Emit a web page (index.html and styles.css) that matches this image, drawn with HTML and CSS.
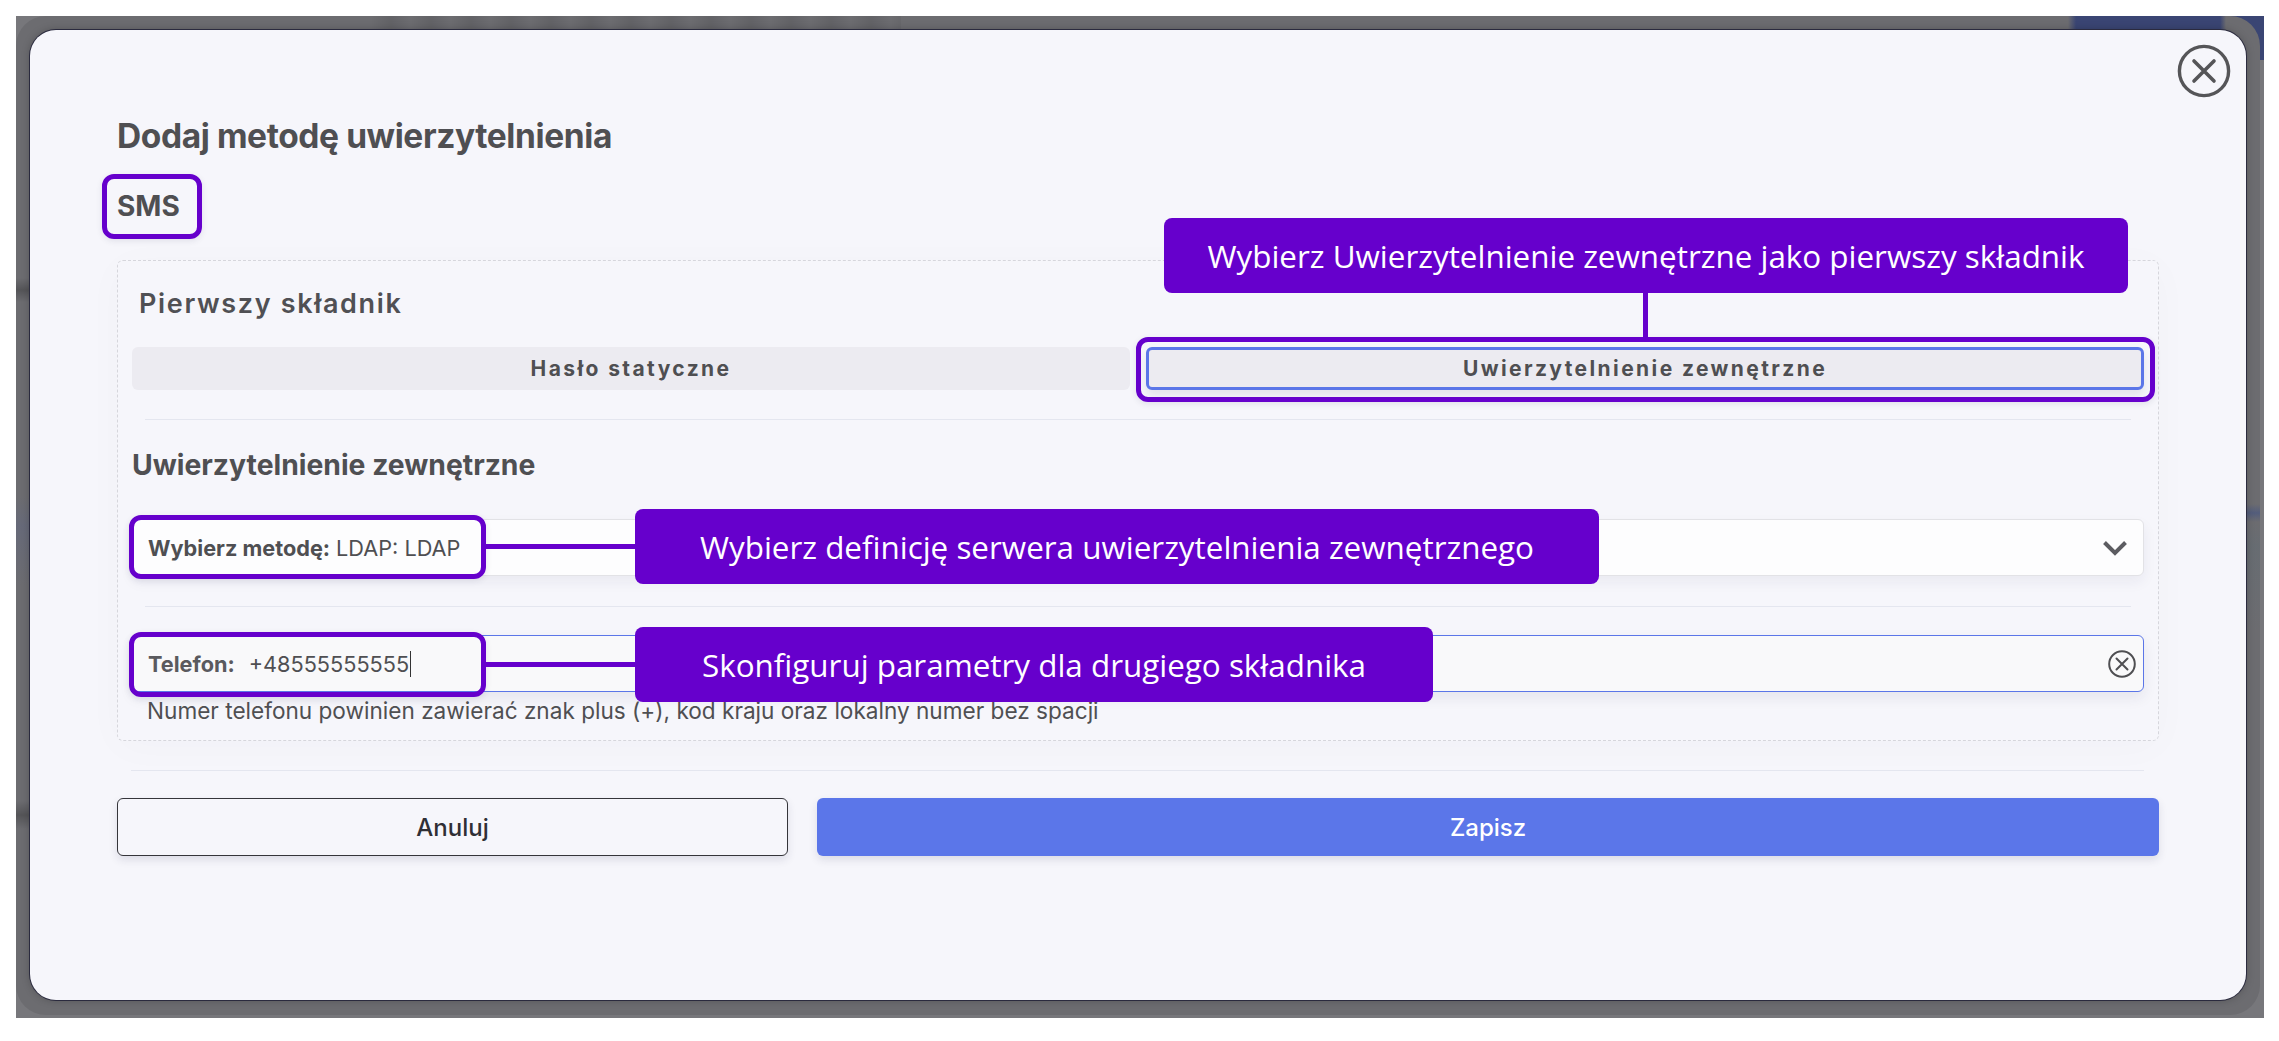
FILE: index.html
```html
<!DOCTYPE html>
<html lang="pl">
<head>
<meta charset="utf-8">
<title>Dodaj metodę uwierzytelnienia</title>
<link rel="stylesheet" href="styles.css">
</head>
<body>
<div class="backdrop">
  <div class="frame">
    <div class="modal">
      <button class="close" aria-label="Zamknij">
        <svg viewBox="0 0 54 54" width="54" height="54"><circle cx="27" cy="27" r="24.6" fill="none" stroke="#555558" stroke-width="3.4"/><path d="M17 17 L37 37 M37 17 L17 37" fill="none" stroke="#555558" stroke-width="3.6" stroke-linecap="round"/></svg>
      </button>
      <h1 class="title">Dodaj metodę uwierzytelnienia</h1>
      <div class="subtitle">SMS</div>
      <section class="panel">
        <h2 class="factor">Pierwszy składnik</h2>
        <div class="tabs">
          <div class="tab">Hasło statyczne</div>
          <div class="tab tab-active">Uwierzytelnienie zewnętrzne</div>
        </div>
        <hr class="sep">
        <h3 class="heading">Uwierzytelnienie zewnętrzne</h3>
        <div class="field field-select">
          <span class="label">Wybierz metodę:</span><span class="value">LDAP: LDAP</span>
          <svg class="chevron" viewBox="0 0 26 16" width="26" height="16"><path d="M2.5 2.5 L13 13 L23.5 2.5" fill="none" stroke="#5c5c61" stroke-width="4"/></svg>
        </div>
        <hr class="sep sep-second">
        <div class="field field-input">
          <span class="label label-phone">Telefon:</span><span class="value value-phone">+48555555555</span><span class="caret"></span>
          <svg class="clear" viewBox="0 0 28 28" width="28" height="28"><circle cx="14" cy="14" r="12.8" fill="none" stroke="#4f4f52" stroke-width="2"/><path d="M8.5 8.5 L19.5 19.5 M19.5 8.5 L8.5 19.5" fill="none" stroke="#4f4f52" stroke-width="2" stroke-linecap="round"/></svg>
        </div>
        <p class="hint">Numer telefonu powinien zawierać znak plus (+), kod kraju oraz lokalny numer bez spacji</p>
      </section>
      <hr class="sep sep-footer">
      <div class="actions">
        <button class="btn btn-cancel">Anuluj</button>
        <button class="btn btn-save">Zapisz</button>
      </div>

      <div class="mark mark-sms"></div>
      <div class="mark mark-tab"></div>
      <div class="mark mark-select"></div>
      <div class="mark mark-phone"></div>
      <div class="line line-tab"></div>
      <div class="line line-select"></div>
      <div class="line line-phone"></div>
      <div class="callout callout-tab">Wybierz Uwierzytelnienie zewnętrzne jako pierwszy składnik</div>
      <div class="callout callout-select">Wybierz definicję serwera uwierzytelnienia zewnętrznego</div>
      <div class="callout callout-phone">Skonfiguruj parametry dla drugiego składnika</div>
    </div>
  </div>
</div>
</body>
</html>
```

FILE: styles.css
```css
* { box-sizing: border-box; }
html, body { margin: 0; padding: 0; background: #fff; }
body { font-family: Inter, "Liberation Sans", sans-serif; color: #4f4f52; }

.backdrop {
  width: 2248px;
  height: 1002px;
  margin: 16px 15px 23px 16px;
  padding: 0 4px 3px 0;
  background:
    linear-gradient(#3a4573, #3a4573) right top / 40px 44px no-repeat,
    #77777b;
  overflow: hidden;
}
.frame {
  width: 100%;
  height: 100%;
  padding: 14px;
  padding-bottom: 15px;
  border-radius: 30px;
  background:
    linear-gradient(90deg, rgba(58,69,115,0) 2052px, #3a4573 2060px, #3a4573 2204px, rgba(58,69,115,0) 2210px) 0 0 / 100% 14px no-repeat,
    repeating-linear-gradient(90deg, rgba(0,0,0,0) 0, rgba(0,0,0,.09) 20px, rgba(0,0,0,0) 40px) 355px 0 / 530px 14px no-repeat,
    linear-gradient(180deg, rgba(0,0,0,0) 262px, rgba(0,0,0,.22) 274px, rgba(0,0,0,0) 286px, rgba(80,90,120,0) 480px, rgba(90,100,140,.3) 510px, rgba(90,100,140,0) 570px, rgba(0,0,0,0) 785px, rgba(0,0,0,.22) 799px, rgba(0,0,0,0) 813px) 0 0 / 14px 100% no-repeat,
    linear-gradient(180deg, rgba(70,85,130,0) 488px, rgba(70,85,130,.65) 497px, rgba(70,85,130,0) 506px, rgba(90,110,120,.25) 530px, rgba(90,110,120,0) 615px) right top / 14px 100% no-repeat,
    #6c6c70;
}
.modal {
  position: relative;
  width: 2216px;
  height: 970px;
  padding: 86px 87px 0 87px;
  background: #f6f6fb;
  border-radius: 26px;
  box-shadow: 0 0 0 1px #2a2a3e, 0 0 8px rgba(0,0,0,.25);
}
.close {
  position: absolute;
  top: 14px;
  left: 2147px;
  width: 54px;
  height: 54px;
  padding: 0;
  border: 0;
  background: none;
  display: block;
}
.close svg { display: block; }

.title {
  margin: 0;
  font-size: 33.5px;
  line-height: 40px;
  font-weight: 700;
  letter-spacing: -0.4px;
  color: #4f4f52;
}
.subtitle {
  margin-top: 33px;
  font-size: 28px;
  line-height: 34px;
  font-weight: 700;
  color: #4f4f52;
}
.panel {
  margin-top: 37px;
  padding: 25px 14px 15px 14px;
  border: 1px dashed #d6d6dc;
  border-radius: 6px;
  box-shadow: 0 6px 40px rgba(40,40,80,.025);
}
.factor {
  margin: 0;
  padding-left: 7px;
  font-size: 27px;
  line-height: 36px;
  font-weight: 600;
  letter-spacing: 1.65px;
  color: #505054;
}
.tabs {
  margin-top: 25px;
  display: grid;
  grid-template-columns: 1fr 1fr;
  gap: 16px;
}
.tab {
  height: 43px;
  display: flex;
  align-items: center;
  justify-content: center;
  background: #ecebf1;
  border-radius: 6px;
  font-size: 21px;
  font-weight: 700;
  letter-spacing: 2.4px;
  color: #4f4f52;
}
.tab-active {
  border: 3px solid #5b76e8;
  box-shadow: 0 6px 8px rgba(40,40,80,.09);
}
.sep {
  margin: 29px 13px 0;
  height: 1px;
  border: 0;
  background: #e4e6ef;
}
.heading {
  margin: 27px 0 0;
  font-size: 28.3px;
  line-height: 36px;
  font-weight: 700;
  color: #4f4f52;
}
.field {
  height: 57px;
  display: flex;
  align-items: center;
  padding-left: 15px;
  border-radius: 6px;
  font-size: 21.7px;
}
.field-select {
  margin-top: 36px;
  background: #fdfdfe;
  border: 1px solid #e2e2e6;
  box-shadow: 0 6px 14px rgba(40,40,80,.06);
}
.field-input {
  margin-top: 28px;
  background: #f9f9fa;
  border: 1px solid #5b76e8;
  box-shadow: 0 6px 14px rgba(40,40,80,.08);
}
.sep-second { margin-top: 30px; }
.label { font-weight: 700; color: #4f4f52; }
.value { margin-left: 6px; color: #4f4f52; }
.label-phone { color: #5a5a5e; }
.value-phone { margin-left: 14px; }
.caret {
  width: 1px;
  height: 26px;
  margin-left: 1px;
  background: #333;
}
.chevron { margin-left: auto; margin-right: 15px; }
.clear { margin-left: auto; margin-right: 7px; }
.hint {
  margin: 5px 0 0 15px;
  font-size: 22.6px;
  line-height: 28px;
  color: #4f4f52;
}
.sep-footer { margin: 29px 15px 0 14px; }
.actions {
  margin-top: 27px;
  display: grid;
  grid-template-columns: 1fr 2fr;
  gap: 29px;
}
.btn {
  height: 58px;
  border-radius: 6px;
  font-family: Inter, "Liberation Sans", sans-serif;
  font-size: 24px;
  font-weight: 500;
  box-shadow: 0 4px 8px rgba(40,40,80,.12);
}
.btn-cancel {
  background: #f6f6fb;
  border: 1.5px solid #35353a;
  color: #2f2f35;
}
.btn-save {
  background: #5b76e9;
  border: 0;
  color: #fff;
}

.mark {
  position: absolute;
  border: 5px solid #6600cc;
  border-radius: 12px;
  box-shadow: 0 2px 6px rgba(40,40,80,.1);
}
.mark-sms { left: 72px; top: 144px; width: 100px; height: 65px; }
.mark-tab { left: 1106px; top: 307px; width: 1019px; height: 65px; }
.mark-select { left: 99px; top: 485px; width: 357px; height: 64px; }
.mark-phone { left: 99px; top: 602px; width: 357px; height: 65px; }

.line { position: absolute; background: #6600cc; }
.line-tab { left: 1613px; top: 263px; width: 5px; height: 44px; }
.line-select { left: 456px; top: 514px; width: 149px; height: 5px; }
.line-phone { left: 456px; top: 632px; width: 149px; height: 5px; }

.callout {
  position: absolute;
  height: 75px;
  display: flex;
  align-items: center;
  justify-content: center;
  background: #6600cc;
  border-radius: 8px;
  font-family: "Open Sans", "Liberation Sans", sans-serif;
  font-size: 31.4px;
  color: #fff;
  white-space: nowrap;
}
.callout-tab { left: 1134px; top: 188px; width: 964px; }
.callout-select { left: 605px; top: 479px; width: 964px; }
.callout-phone { left: 605px; top: 597px; width: 798px; }
```
